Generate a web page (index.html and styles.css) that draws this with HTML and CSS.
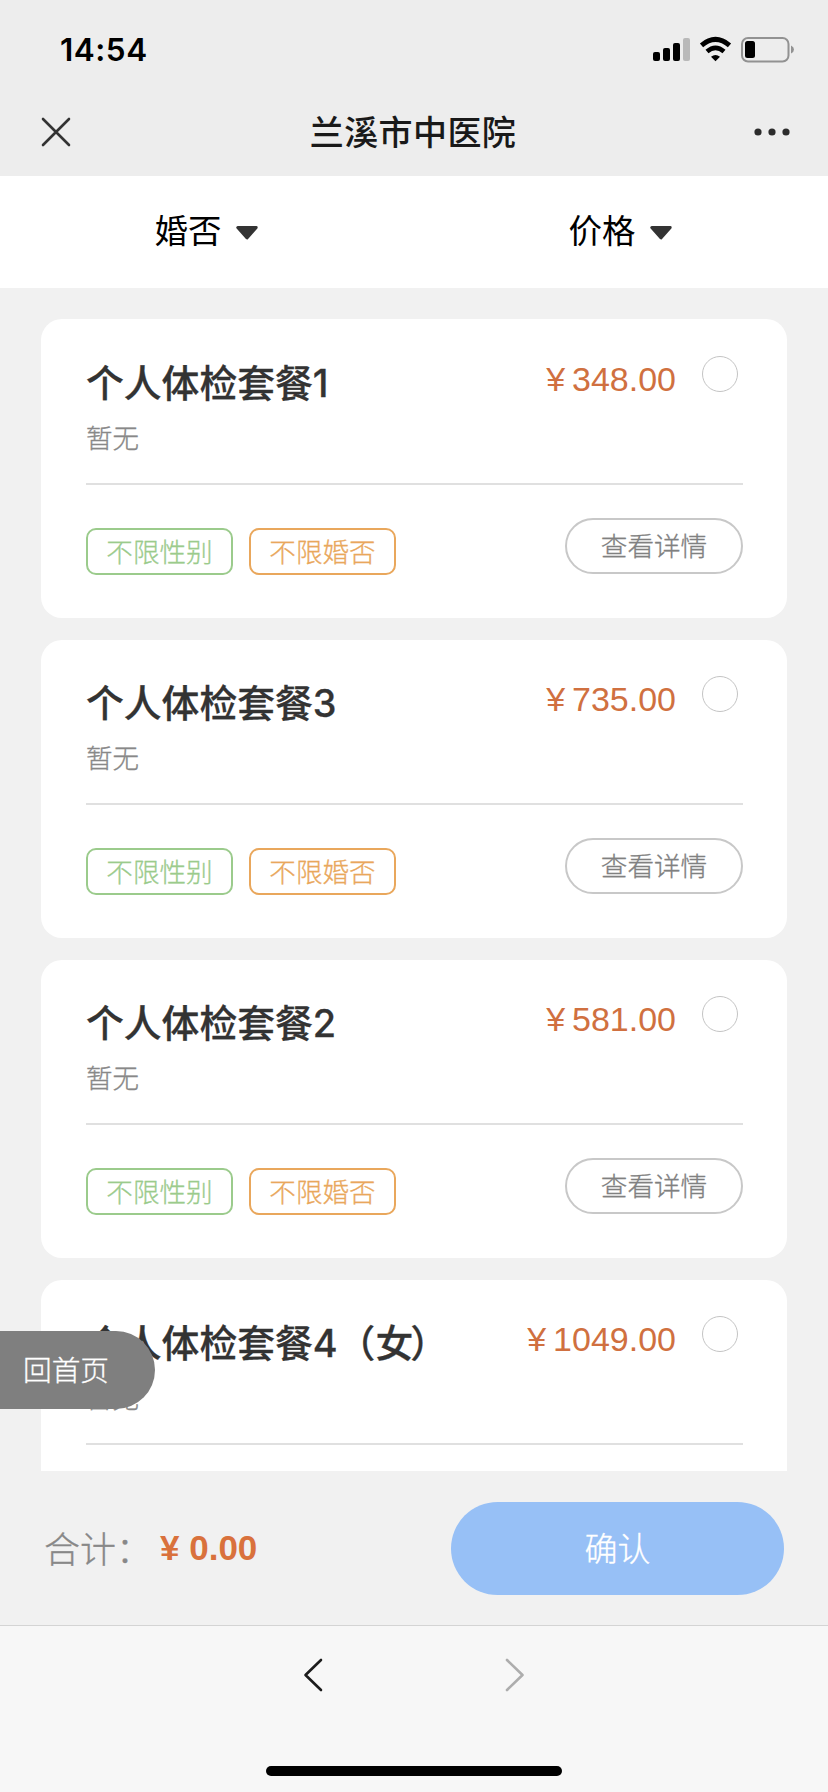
FILE: index.html
```html
<!DOCTYPE html>
<html lang="zh-CN">
<head>
<meta charset="utf-8">
<title>兰溪市中医院</title>
<link rel="stylesheet" href="styles.css">
</head>
<body>
<div class="screen">
  <header class="top">
    <div class="status">
      <span class="time">14:54</span>
      <svg class="status-icons" width="144" height="28" viewBox="0 0 144 28">
        <rect x="3" y="17" width="7" height="9" rx="2"/>
        <rect x="13" y="13" width="7" height="13" rx="2"/>
        <rect x="23" y="8" width="7" height="18" rx="2"/>
        <rect x="33" y="3" width="7" height="23" rx="2" fill="#b9b9b9"/>
        <path d="M51.500 10.300 Q65.500 -1.500 79.500 10.300" fill="none" stroke="#000" stroke-width="5"/>
        <path d="M57 16.500 Q65.500 9.300 74 16.500" fill="none" stroke="#000" stroke-width="4.600"/>
        <path d="M61 21.800 Q65.500 18 70 21.800 L65.500 26.300Z"/>
        <rect x="92" y="3" width="46.500" height="23.500" rx="6" fill="none" stroke="#929292" stroke-width="2"/>
        <rect x="95" y="6" width="10" height="17" rx="2.500"/>
        <path d="M141 10.500 Q144 12 144 14.500 Q144 17 141 18.500Z" fill="#929292"/>
      </svg>
    </div>
    <div class="nav">
      <svg width="32" height="32" viewBox="0 0 32 32"><path d="M3 3 L29 29 M29 3 L3 29" fill="none" stroke="#333" stroke-width="2.600" stroke-linecap="round"/></svg>
      <h1 class="nav-title">兰溪市中医院</h1>
      <svg width="36" height="8" viewBox="0 0 36 8"><g fill="#2c2c2c"><circle cx="4" cy="4" r="3.600"/><circle cx="18" cy="4" r="3.600"/><circle cx="32" cy="4" r="3.600"/></g></svg>
    </div>
  </header>

  <div class="filters">
    <div class="filter"><span>婚否</span><svg width="22" height="14" viewBox="0 0 22 14"><path d="M1.700 1.500 H20.300 L11 12Z" fill="#333" stroke="#333" stroke-width="2.800" stroke-linejoin="round"/></svg></div>
    <div class="filter"><span>价格</span><svg width="22" height="14" viewBox="0 0 22 14"><path d="M1.700 1.500 H20.300 L11 12Z" fill="#333" stroke="#333" stroke-width="2.800" stroke-linejoin="round"/></svg></div>
  </div>

  <main class="list">
    <article class="card">
      <div class="head"><h2 class="name">个人体检套餐1</h2><span class="price">¥ 348.00</span><span class="radio"></span></div>
      <p class="desc">暂无</p>
      <div class="foot"><span class="tag green">不限性别</span><span class="tag orange">不限婚否</span><span class="detail">查看详情</span></div>
    </article>
    <article class="card">
      <div class="head"><h2 class="name">个人体检套餐3</h2><span class="price">¥ 735.00</span><span class="radio"></span></div>
      <p class="desc">暂无</p>
      <div class="foot"><span class="tag green">不限性别</span><span class="tag orange">不限婚否</span><span class="detail">查看详情</span></div>
    </article>
    <article class="card">
      <div class="head"><h2 class="name">个人体检套餐2</h2><span class="price">¥ 581.00</span><span class="radio"></span></div>
      <p class="desc">暂无</p>
      <div class="foot"><span class="tag green">不限性别</span><span class="tag orange">不限婚否</span><span class="detail">查看详情</span></div>
    </article>
    <article class="card">
      <div class="head"><h2 class="name">个人体检套餐4（女<span class="paren">）</span></h2><span class="price">¥ 1049.00</span><span class="radio"></span></div>
      <p class="desc">暂无</p>
      <div class="foot"></div>
    </article>
  </main>

  <div class="checkout">
    <span class="sum-label">合计：</span>
    <span class="sum">¥ 0.00</span>
    <span class="confirm">确认</span>
  </div>

  <footer class="toolbar">
    <div class="history">
      <svg width="20" height="36" viewBox="0 0 20 36"><path d="M18 3 L2.500 18 L18 33" fill="none" stroke="#1c1c1c" stroke-width="2.600" stroke-linecap="round" stroke-linejoin="round"/></svg>
      <svg width="20" height="36" viewBox="0 0 20 36"><path d="M2 3 L17.500 18 L2 33" fill="none" stroke="#adadad" stroke-width="2.600" stroke-linecap="round" stroke-linejoin="round"/></svg>
    </div>
    <div class="home-bar"></div>
  </footer>

  <a class="go-home">回首页</a>
</div>
</body>
</html>
```

FILE: styles.css
```css
* { box-sizing: border-box; margin: 0; padding: 0; }

body {
  font-family: "Liberation Sans", "Noto Sans CJK SC", sans-serif;
  background: #f1f1f1;
}

.screen {
  position: relative;
  width: 828px;
  height: 1792px;
  display: flex;
  flex-direction: column;
  overflow: hidden;
}

.top { height: 176px; background: #ededed; flex: none; }

.status {
  height: 88px;
  display: flex;
  justify-content: space-between;
  padding: 30px 34px 0 60px;
}
.time { font: 600 31.500px/40px Inter, sans-serif; color: #000; letter-spacing: 0.5px; }
.status-icons { margin-top: 5px; }

.nav {
  height: 88px;
  display: flex;
  align-items: center;
  justify-content: space-between;
  padding: 0 38px 0 40px;
}
.nav-title {
  padding-bottom: 2px;
  font: 500 34px/50px "Noto Sans CJK SC", sans-serif;
  letter-spacing: 0.4px;
  color: #191919;
}

.filters { height: 112px; background: #fff; display: flex; flex: none; }
.filter {
  flex: 1;
  display: flex;
  align-items: center;
  justify-content: center;
  gap: 14px;
  padding: 0 2px 6px 0;
  font: 400 33.500px/50px "Noto Sans CJK SC", sans-serif;
  color: #000;
}
.filter svg { margin-top: 7px; }

.list {
  height: 1183px;
  flex: none;
  overflow: hidden;
  padding: 31px 41px 0;
  display: flex;
  flex-direction: column;
  gap: 22px;
}
.card {
  height: 298px;
  flex: none;
  border-radius: 21px;
  background: #fff;
  padding: 36px 44px 0 45px;
}
.card:first-child { height: 299px; padding-top: 37px; }
.head { display: flex; align-items: flex-start; height: 66px; }
.name {
  flex: 1;
  font: 500 37.800px/55px Inter, "Noto Sans CJK SC", sans-serif;
  color: #333;
  -webkit-text-stroke: 0.3px #333;
}
.paren { margin-left: -3px; }
.price { font-size: 34px; line-height: 46px; word-spacing: -2.500px; color: #d07040; }
.radio {
  width: 36px;
  height: 36px;
  margin: 0 5px 0 26px;
  border: 1.500px solid #c4c4c4;
  border-radius: 50%;
}
.desc {
  height: 63px;
  font: 300 26.500px/30px "Noto Sans CJK SC", sans-serif;
  -webkit-text-stroke: 0.3px currentColor;
  color: #888;
  border-bottom: 2px solid #e0e0e0;
}
.foot {
  display: flex;
  align-items: flex-start;
  gap: 16px;
  padding-top: 33px;
  font: 300 26.600px/41px "Noto Sans CJK SC", sans-serif;
  -webkit-text-stroke: 0.3px currentColor;
}
.tag {
  width: 147px;
  height: 47px;
  margin-top: 10px;
  border: 2px solid;
  border-radius: 10px;
  text-align: center;
}
.green { color: #9bcb8c; }
.orange { color: #e9a75c; }
.detail {
  width: 178px;
  height: 56px;
  margin-left: auto;
  border: 2px solid #c8c8c8;
  border-radius: 28px;
  line-height: 50px;
  text-align: center;
  color: #808080;
}

.checkout {
  height: 154px;
  flex: none;
  display: flex;
  align-items: center;
  padding: 0 44px;
}
.sum-label {
  width: 116px;
  padding-bottom: 2px;
  font: 300 36px/50px "Noto Sans CJK SC", sans-serif;
  -webkit-text-stroke: 0.3px currentColor;
  color: #888;
  white-space: nowrap;
}
.sum { font-size: 35px; font-weight: 700; color: #d9713c; }
.confirm {
  width: 333px;
  height: 93px;
  margin-left: auto;
  border-radius: 47px;
  background: #97c0f6;
  color: #fff;
  text-align: center;
  font: 300 33px/91px "Noto Sans CJK SC", sans-serif;
  -webkit-text-stroke: 0.3px currentColor;
}

.toolbar {
  flex: 1;
  background: #f7f7f7;
  border-top: 1px solid #d4d4d4;
  display: flex;
  flex-direction: column;
  align-items: center;
  justify-content: space-between;
  padding: 31px 0 16px;
}
.history { display: flex; gap: 182px; }
.home-bar { width: 296px; height: 10px; border-radius: 5px; background: #000; }

.go-home {
  position: absolute;
  left: 0;
  top: 1331px;
  width: 155px;
  height: 78px;
  padding-left: 23px;
  border-radius: 0 39px 39px 0;
  background: #7f7f7f;
  color: #fff;
  font: 300 28.700px/75px "Noto Sans CJK SC", sans-serif;
  -webkit-text-stroke: 0.3px currentColor;
}
```
